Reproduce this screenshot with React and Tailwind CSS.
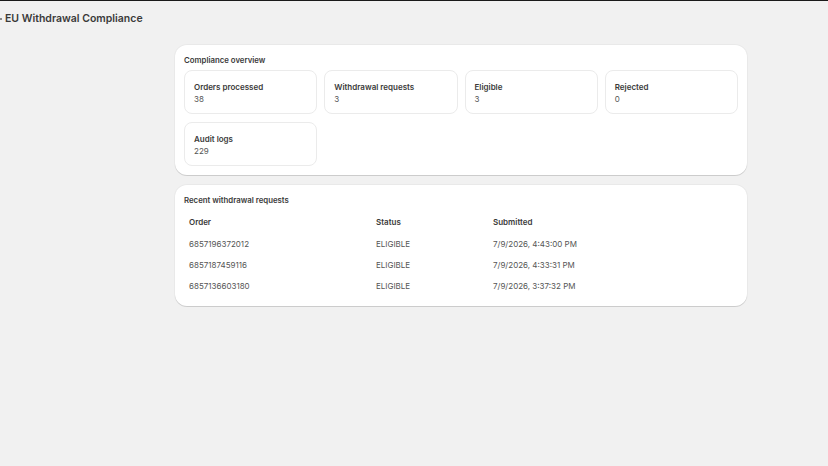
import React from "react";

const stats = [
  { label: "Orders processed", value: "38" },
  { label: "Withdrawal requests", value: "3" },
  { label: "Eligible", value: "3" },
  { label: "Rejected", value: "0" },
  { label: "Audit logs", value: "229" },
];

const requests = [
  { order: "6857196372012", status: "ELIGIBLE", submitted: "7/9/2026, 4:43:00 PM" },
  { order: "6857187459116", status: "ELIGIBLE", submitted: "7/9/2026, 4:33:31 PM" },
  { order: "6857136603180", status: "ELIGIBLE", submitted: "7/9/2026, 3:37:32 PM" },
];

const StatBox = ({ label, value }) => (
  <div className="h-[44px] rounded-[8px] border border-[#ebebeb] bg-white px-[9px] pt-[10px]">
    <div className="text-[8px] font-semibold leading-[12px] text-[#3a3a3a]">{label}</div>
    <div className="text-[8px] leading-[12px] text-[#555]">{value}</div>
  </div>
);

export default function App() {
  return (
    <div
      className="min-h-[466px] w-[828px] border-t border-[#1a1a1a] bg-[#f1f1f1] text-[#303030]"
      style={{ fontFamily: "Inter, 'Noto Sans', sans-serif" }}
    >
      {/* page header */}
      <div className="flex h-[35px] items-center">
        <span className="h-[2px] w-[2px] bg-[#8a8a8a]" />
        <h1 className="ml-[3px] text-[10.5px] font-semibold text-[#3a3a3a]">EU Withdrawal Compliance</h1>
      </div>

      <div className="ml-[175px] flex w-[572px] flex-col gap-[10px] pt-[9px]">
        {/* overview card */}
        <div className="rounded-[12px] bg-white px-[9px] pb-[9px] pt-[10px] shadow-[0_1px_0_rgba(0,0,0,0.12),0_0_0_1px_rgba(0,0,0,0.03)]">
          <h2 className="text-[7.8px] font-semibold leading-[10px] text-[#3a3a3a]">Compliance overview</h2>
          <div className="mt-[5px] grid grid-cols-4 gap-x-[7px] gap-y-[8px]">
            {stats.map((s) => (
              <StatBox key={s.label} {...s} />
            ))}
          </div>
        </div>

        {/* recent requests card */}
        <div className="rounded-[12px] bg-white px-[9px] pb-[10px] pt-[10px] shadow-[0_1px_0_rgba(0,0,0,0.12),0_0_0_1px_rgba(0,0,0,0.03)]">
          <h2 className="text-[7.8px] font-semibold leading-[10px] text-[#3a3a3a]">Recent withdrawal requests</h2>
          <div className="mt-[6px] text-[8px]">
            <div className="grid h-[22px] grid-cols-[187px_117px_1fr] items-center px-[5px] font-semibold text-[#3a3a3a]">
              <div>Order</div>
              <div>Status</div>
              <div>Submitted</div>
            </div>
            {requests.map((r) => (
              <div
                key={r.order}
                className="grid h-[21px] grid-cols-[187px_117px_1fr] items-center px-[5px] text-[#555]"
              >
                <div>{r.order}</div>
                <div>{r.status}</div>
                <div>{r.submitted}</div>
              </div>
            ))}
          </div>
        </div>
      </div>
    </div>
  );
}
